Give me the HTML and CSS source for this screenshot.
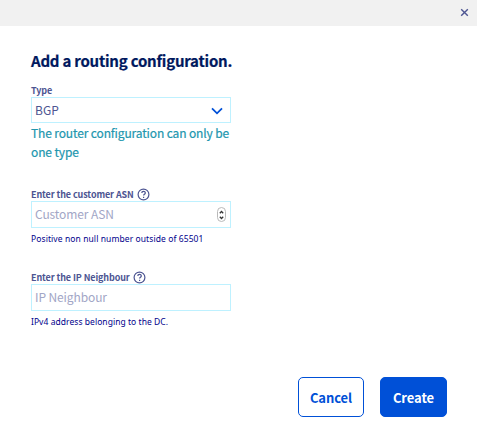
FILE: index.html
```
<!DOCTYPE html>
<html lang="en">
<head>
<meta charset="utf-8">
<title>Add a routing configuration</title>
<link rel="stylesheet" href="styles.css">
</head>
<body>
<div class="modal">
  <header class="modal-header">
    <button class="close" aria-label="Close"><svg width="9" height="9" viewBox="0 0 9 9"><path d="M1.2 1.2l6.6 6.6M7.8 1.2L1.2 7.8"/></svg></button>
  </header>
  <main class="modal-body">
    <h1 class="title">Add a routing configuration.</h1>
    <div class="field field-type">
      <div class="label">Type</div>
      <div class="control select"><span>BGP</span><svg class="chevron" width="12" height="8" viewBox="0 0 12 8"><path d="M1 1.3l5 5 5-5"/></svg></div>
      <p class="info">The router configuration can only be one type</p>
    </div>
    <div class="field field-asn">
      <div class="label"><span>Enter the customer ASN</span><svg class="help" width="13" height="13" viewBox="0 0 13 13"><circle cx="6.5" cy="6.5" r="5.4"/><path d="M4.8 5.1c0-2.4 3.5-2.3 3.5-.2 0 1.3-1.7 1.2-1.7 2.6M6.6 8.7v1.2"/></svg></div>
      <div class="control placeholder"><span>Customer ASN</span><span class="spinner"><svg width="7" height="12" viewBox="0 0 7 12"><path d="M1.8 4.2l1.7-1.7 1.7 1.7M1.8 7.8l1.7 1.7 1.7-1.7"/></svg></span></div>
      <p class="hint hint-asn">Positive non null number outside of 65501</p>
    </div>
    <div class="field field-ip">
      <div class="label"><span>Enter the IP Neighbour</span><svg class="help" width="13" height="13" viewBox="0 0 13 13"><circle cx="6.5" cy="6.5" r="5.4"/><path d="M4.8 5.1c0-2.4 3.5-2.3 3.5-.2 0 1.3-1.7 1.2-1.7 2.6M6.6 8.7v1.2"/></svg></div>
      <div class="control placeholder"><span>IP Neighbour</span></div>
      <p class="hint">IPv4 address belonging to the DC.</p>
    </div>
  </main>
  <footer class="actions">
    <button class="btn btn-outline">Cancel</button>
    <button class="btn btn-primary">Create</button>
  </footer>
</div>
</body>
</html>
```
FILE: styles.css
```
* { box-sizing: border-box; }
body { margin: 0; background: #fff; font-family: "Noto Sans CJK SC", "Noto Sans", sans-serif; color: #4d5592; }
h1, p { margin: 0; }
button { font-family: inherit; }
svg { fill: none; display: block; flex: none; }
.modal { height: 440px; display: flex; flex-direction: column; }
.modal-header { height: 26px; background: #f1f1f1; display: flex; justify-content: flex-end; align-items: center; padding: 0 8px 1px 0; }
.close { border: 0; background: none; padding: 0; }
.close svg { stroke: #4d5592; stroke-width: 1.4; }
.modal-body { flex: 1; padding: 24px 31px 0; }
.title { font-size: 15px; letter-spacing: -0.22px; line-height: 22px; font-weight: 700; color: #00185e; white-space: nowrap; -webkit-text-stroke: 0.2px #00185e; }
.field { width: 200px; }
.field-type { margin-top: 13px; height: 104px; }
.field-asn { height: 83px; }
.label { display: flex; align-items: center; gap: 3px; height: 12px; font-size: 9px; letter-spacing: -0.1px; line-height: 12px; font-weight: 700; white-space: nowrap; }
.help { stroke: #4d5592; stroke-width: 1.2; margin-top: -1px; }
.control { height: 27px; border: 1px solid #bef1ff; display: flex; align-items: center; justify-content: space-between; padding: 0 4px 0 3px; font-size: 12px; letter-spacing: -0.1px; line-height: 20px; }
.control > span:first-child { margin-top: -1px; }
.select { height: 26px; padding-right: 7px; letter-spacing: 0; }
.select > span:first-child { margin-top: 0; }
.chevron { stroke: #0050d7; stroke-width: 1.8; margin-top: 2px; }
.placeholder { color: #a2a6c6; }
.spinner { width: 9px; height: 15px; border: 1px solid #b9b9b9; border-radius: 5px; display: grid; place-items: center; }
.spinner svg { stroke: #333; stroke-width: 1.3; }
.info { margin-right: -4px; font-size: 12px; letter-spacing: -0.13px; line-height: 19px; color: #2196ae; -webkit-text-stroke: 0.2px #2196ae; }
.hint { margin-top: 4px; font-family: "Noto Sans", sans-serif; font-size: 8.5px; letter-spacing: 0.05px; line-height: 13px; color: #00008b; white-space: nowrap; }
.hint-asn { letter-spacing: 0.09px; }
.actions { display: flex; justify-content: flex-end; gap: 16px; padding: 0 30px 23px 0; }
.btn { height: 40px; border: 1px solid #0050d7; border-radius: 5px; font-size: 13px; line-height: 20px; font-weight: 700; padding: 2px 0 0; letter-spacing: -0.08px; }
.btn-outline { width: 66px; background: #fff; color: #0050d7; }
.btn-primary { width: 67px; background: #0050d7; color: #fff; }
```
